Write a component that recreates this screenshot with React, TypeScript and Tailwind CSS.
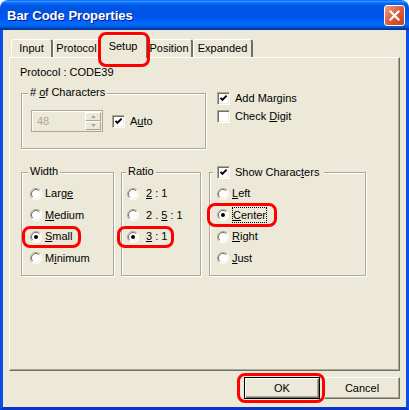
import type { ReactNode } from 'react'

const face = 'bg-[#ece9d8]'

function Check({ checked }: { checked?: boolean }) {
  return (
    <span className="flex h-[13px] w-[13px] shrink-0 items-center justify-center border border-t-[#aca899] border-l-[#aca899] border-b-white border-r-white bg-white shadow-[inset_1px_1px_0_#716f64,inset_-1px_-1px_0_#f1efe2]">
      {checked && (
        <svg width="9" height="9" viewBox="0 0 9 9">
          <path d="M1.5 3.8 L3.4 5.9 L7.6 1.6" stroke="#000" strokeWidth="1.9" fill="none" />
        </svg>
      )}
    </span>
  )
}

function Radio({ checked }: { checked?: boolean }) {
  return (
    <svg width="12" height="12" viewBox="0 0 12 12" className="shrink-0">
      <circle cx="6" cy="6" r="5.5" fill="#fff" />
      <path d="M9.9 2.1 A5.5 5.5 0 0 0 2.1 9.9" stroke="#aca899" fill="none" />
      <path d="M2.1 9.9 A5.5 5.5 0 0 0 9.9 2.1" stroke="#fff" fill="none" />
      <path d="M9.2 2.8 A4.5 4.5 0 0 0 2.8 9.2" stroke="#716f64" fill="none" />
      <path d="M2.8 9.2 A4.5 4.5 0 0 0 9.2 2.8" stroke="#f1efe2" fill="none" />
      {checked && <circle cx="6" cy="6" r="2" fill="#000" />}
    </svg>
  )
}

function Mark({ className }: { className: string }) {
  return <span className={`pointer-events-none absolute z-20 rounded-[8px] border-[3px] border-[#ff0000] ${className}`} />
}

function Group({ className, title, children }: { className: string; title: ReactNode; children?: ReactNode }) {
  return (
    <div className={`relative border border-[#aca899] shadow-[inset_1px_1px_0_#fff,1px_1px_0_#fff] ${className}`}>
      {title}
      {children}
    </div>
  )
}

function Title({ children, left }: { children: ReactNode; left: string }) {
  return <span className={`absolute -top-[8px] ${left} ${face} px-[2px]`}>{children}</span>
}

function RadioRow({ checked, children, gap = 'ml-[3px]', mark }: { checked?: boolean; children: ReactNode; gap?: string; mark?: string }) {
  return (
    <div className="relative flex h-[13px] items-center">
      <Radio checked={checked} />
      <span className={gap}>{children}</span>
      {mark && <Mark className={mark} />}
    </div>
  )
}

function Tab({ children, width, selected }: { children: ReactNode; width: string; selected?: boolean }) {
  return (
    <div
      className={`relative flex items-center justify-center rounded-t-[3px] border-l border-t border-l-white border-t-white border-r-[2px] border-r-[#716f64] ${face} ${width} ${
        selected ? 'z-10 -mx-[2px] -mb-px h-[23px] pb-[2px]' : 'h-[18px]'
      }`}
    >
      {children}
      {selected && <Mark className="-left-[2px] -right-[4px] -top-[4px] -bottom-[9px]" />}
    </div>
  )
}

function SpinArrow({ up }: { up?: boolean }) {
  return (
    <span className="flex h-[10px] w-[16px] items-center justify-center border border-t-white border-l-white border-b-[#aca899] border-r-[#aca899]">
      <svg width="5" height="3" viewBox="0 0 5 3">
        <path d={up ? 'M0 3 L2.5 0 L5 3 Z' : 'M0 0 L5 0 L2.5 3 Z'} fill="#aca899" />
      </svg>
    </span>
  )
}

export default function App() {
  return (
    <div className="flex h-[410px] w-[409px] flex-col overflow-hidden rounded-t-[8px] bg-white font-['Liberation_Sans',Arial,sans-serif] text-[11px] leading-[13px] text-black">
      <div className="flex h-[30px] shrink-0 items-center justify-between bg-[linear-gradient(180deg,#0058ee_0%,#3593ff_4%,#288eff_6%,#127dff_8%,#036ffc_10%,#0262ee_14%,#0057e5_20%,#0054e3_24%,#0055eb_56%,#005bf5_66%,#026afe_76%,#0062ef_86%,#0052d6_92%,#0040ab_94%,#003092_100%)] pl-[7px] pr-[4px]">
        <span className="text-[13px] font-bold text-white [text-shadow:1px_1px_0_#0a1883]">Bar Code Properties</span>
        <span className="flex h-[21px] w-[21px] items-center justify-center rounded-[3px] border border-white bg-[linear-gradient(135deg,#f3a089_0%,#e0603f_45%,#c63a1a_100%)]">
          <svg width="11" height="11" viewBox="0 0 11 11">
            <path d="M1.5 1.5 L9.5 9.5 M9.5 1.5 L1.5 9.5" stroke="#fff" strokeWidth="2.2" strokeLinecap="square" />
          </svg>
        </span>
      </div>

      <div className={`flex-1 border-x-[3px] border-b-[3px] border-x-[#0b4ee6] border-b-[#0536cf] ${face} px-[6px] pt-[5px]`}>
        <div className="ml-[2px] flex h-[22px] items-end">
          <Tab width="w-[42px]">Input</Tab>
          <Tab width="w-[48px]">Protocol</Tab>
          <Tab width="w-[49px]" selected>
            Setup
          </Tab>
          <Tab width="w-[47px]">Position</Tab>
          <Tab width="w-[60px]">Expanded</Tab>
        </div>

        <div className="h-[314px] w-[391px] border border-t-white border-l-white border-r-[#716f64] border-b-[#716f64] pl-[10px] shadow-[inset_-1px_-1px_0_#aca899]">
          <div className="mt-[8px]">Protocol : CODE39</div>

          <div className="mt-[14px] flex items-start">
            <Group
              className="ml-px h-[56px] w-[185px] pl-[9px] pt-[16px]"
              title={
                <Title left="left-[6px]">
                  # <u>o</u>f Characters
                </Title>
              }
            >
              <div className="flex items-center">
                <div className="flex h-[22px] w-[72px] justify-between border border-[#aca899] p-px shadow-[inset_1px_1px_0_#fff]">
                  <span className="self-center pl-[4px] text-[#aca899]">48</span>
                  <span className="flex flex-col">
                    <SpinArrow up />
                    <SpinArrow />
                  </span>
                </div>
                <div className="ml-[9px] flex items-center gap-[5px]">
                  <Check checked />
                  <span>
                    A<u>u</u>to
                  </span>
                </div>
              </div>
            </Group>

            <div className="-mt-px ml-[11px] flex flex-col gap-[5px]">
              <div className="flex items-center gap-[5px]">
                <Check checked />
                <span>Add Margins</span>
              </div>
              <div className="flex items-center gap-[5px]">
                <Check />
                <span>
                  Check <u>D</u>igit
                </span>
              </div>
            </div>
          </div>

          <div className="mt-[23px] flex items-start">
            <Group className="ml-px flex h-[104px] w-[93px] flex-col gap-[8.67px] pl-[8px] pt-[14px]" title={<Title left="left-[6px]">Width</Title>}>
              <RadioRow>
                Larg<u>e</u>
              </RadioRow>
              <RadioRow>
                <u>M</u>edium
              </RadioRow>
              <RadioRow checked mark="-left-[8px] -top-[4px] h-[22px] w-[59px]">
                <u>S</u>mall
              </RadioRow>
              <RadioRow>
                M<u>i</u>nimum
              </RadioRow>
            </Group>

            <Group className="ml-[7px] flex h-[104px] w-[80px] flex-col gap-[8.67px] pl-[5px] pt-[14px]" title={<Title left="left-[4px]">Ratio</Title>}>
              <RadioRow gap="ml-[7px]">
                <u>2</u> : 1
              </RadioRow>
              <RadioRow gap="ml-[7px]">
                2 . <u>5</u> : 1
              </RadioRow>
              <RadioRow checked gap="ml-[7px]" mark="-left-[10px] -top-[4px] h-[22px] w-[57px]">
                <u>3</u> : 1
              </RadioRow>
            </Group>

            <Group
              className="ml-[8px] flex h-[104px] w-[157px] flex-col gap-[8.67px] pl-[7px] pt-[14px]"
              title={
                <span className={`absolute -top-[7px] left-[3px] flex items-center gap-[5px] ${face} pl-[4px] pr-[5px]`}>
                  <Check checked />
                  <span>
                    Show Charac<u>t</u>ers
                  </span>
                </span>
              }
            >
              <RadioRow>
                <u>L</u>eft
              </RadioRow>
              <RadioRow checked mark="-left-[10px] -top-[6px] h-[24px] w-[70px]">
                <span className="border border-dotted border-black py-px">
                  <u>C</u>enter
                </span>
              </RadioRow>
              <RadioRow>
                <u>R</u>ight
              </RadioRow>
              <RadioRow>
                <u>J</u>ust
              </RadioRow>
            </Group>
          </div>
        </div>

        <div className="mt-[6px] flex justify-end gap-[4px]">
          <div className="relative">
            <button className={`h-[22px] w-[76px] border border-black ${face} shadow-[inset_1px_1px_0_#fff,inset_-1px_-1px_0_#716f64,inset_-2px_-2px_0_#aca899]`}>OK</button>
            <Mark className="-left-[7px] -right-[5px] -top-[4px] -bottom-[4px]" />
          </div>
          <button className={`h-[22px] w-[76px] border border-t-white border-l-white border-b-[#716f64] border-r-[#716f64] ${face} shadow-[inset_-1px_-1px_0_#aca899]`}>
            Cancel
          </button>
        </div>
      </div>
    </div>
  )
}
